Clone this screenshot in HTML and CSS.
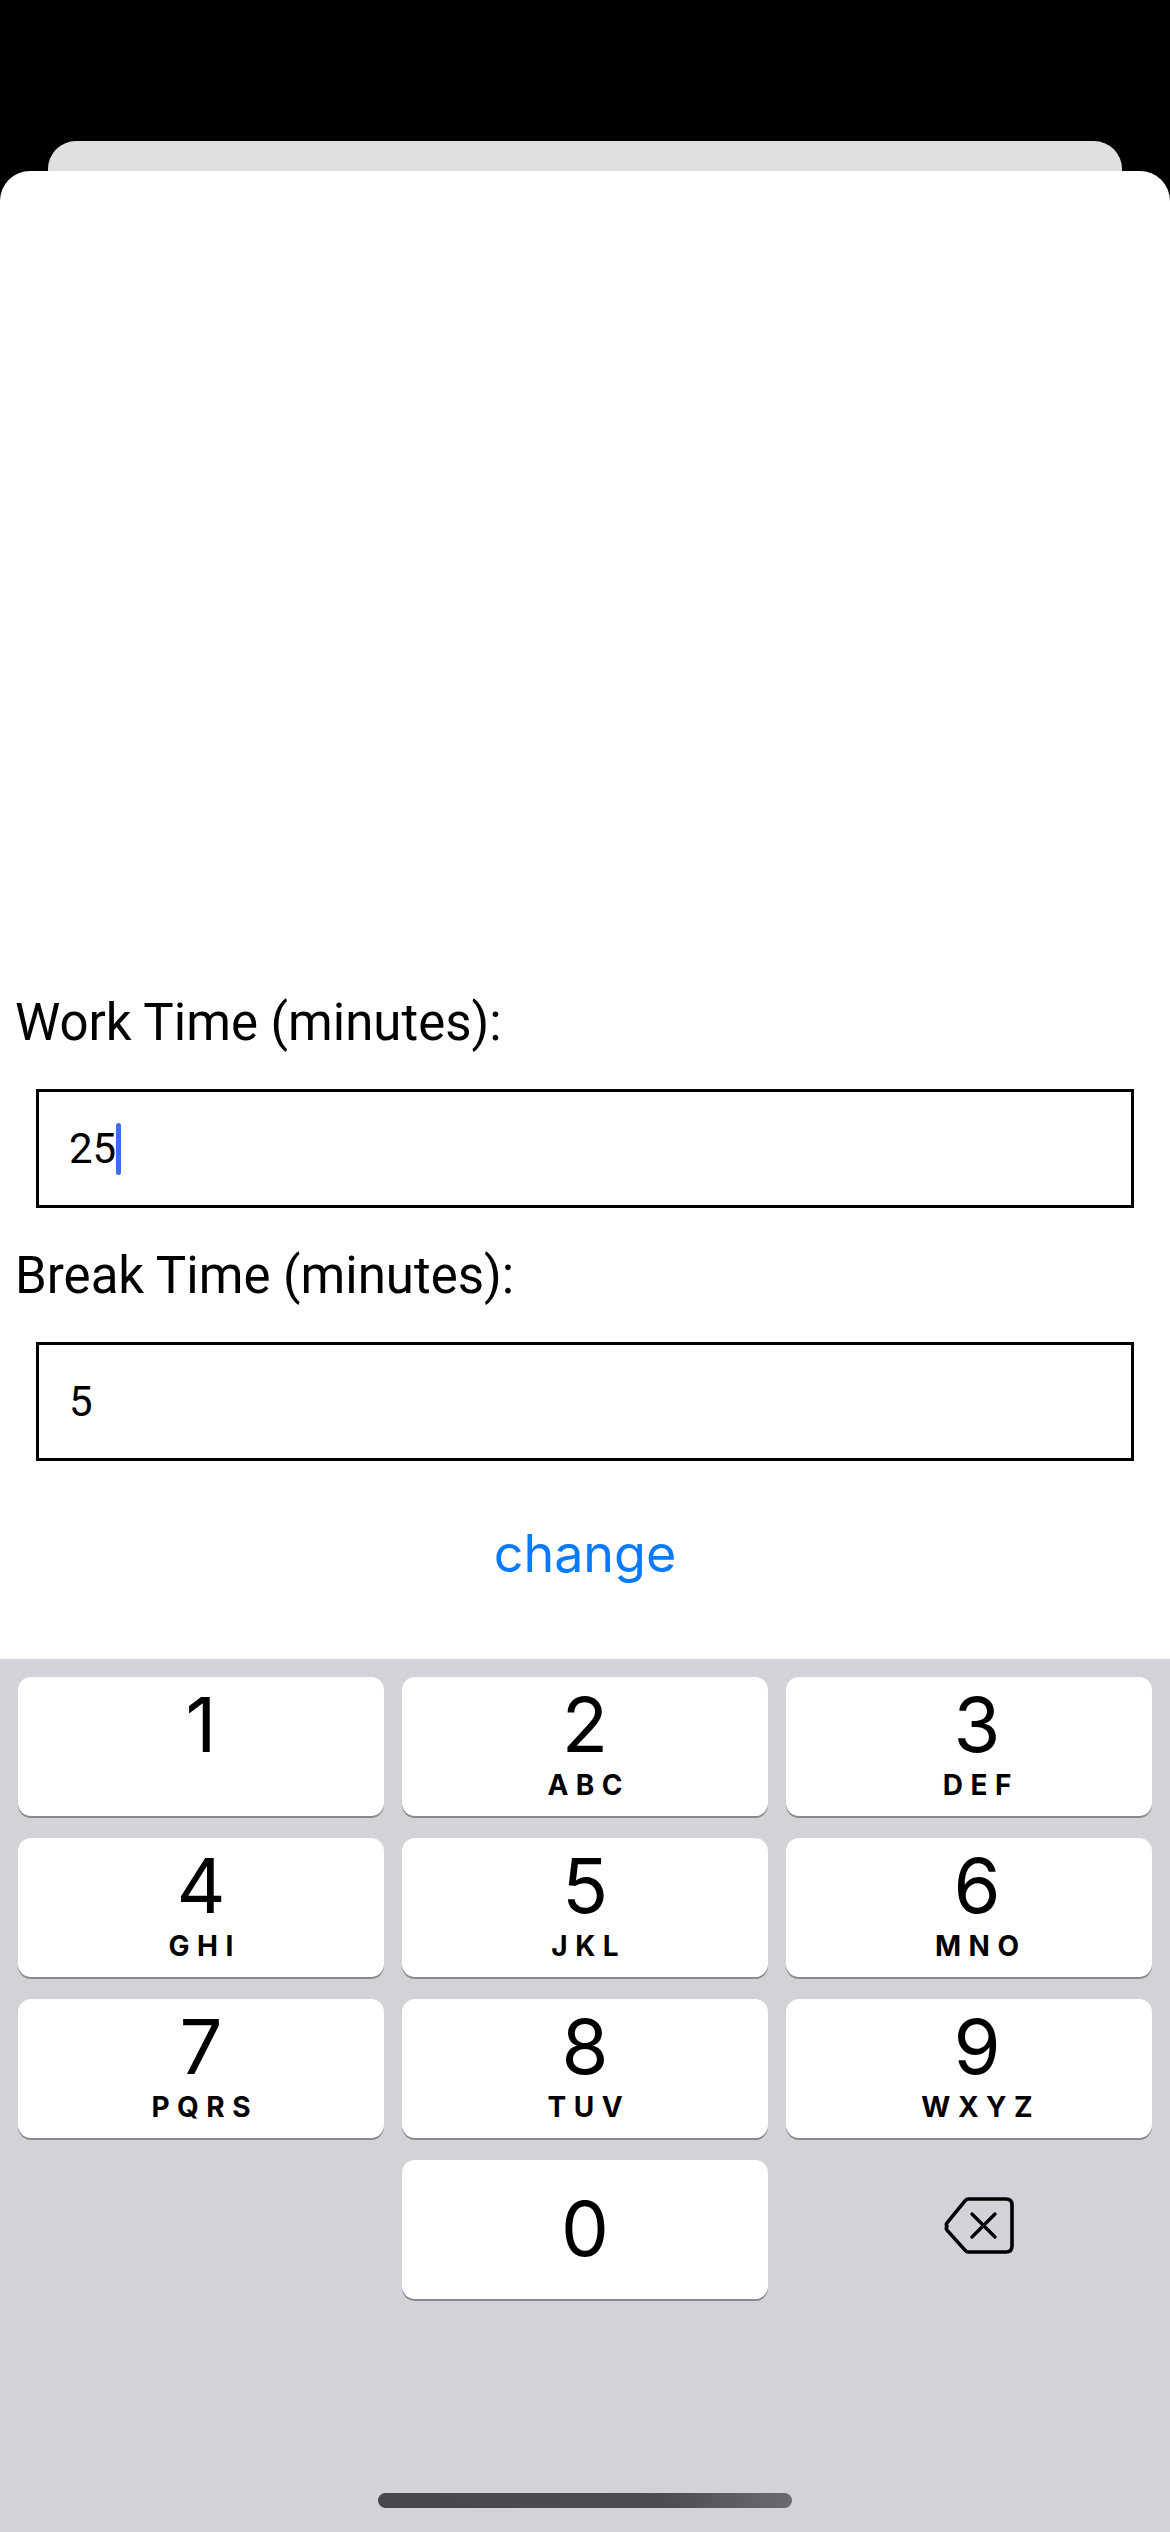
FILE: index.html
```html
<!DOCTYPE html>
<html lang="en">
<head>
<meta charset="utf-8">
<title>Timer Settings</title>
<link rel="stylesheet" href="styles.css">
</head>
<body>
<div class="screen">
  <div class="back-card"></div>
  <div class="sheet">
    <div class="form">
      <div class="label">Work Time (minutes):</div>
      <div class="field"><span class="value">25</span><span class="caret"></span></div>
      <div class="label label-second">Break Time (minutes):</div>
      <div class="field"><span class="value">5</span></div>
      <div class="action">change</div>
    </div>
  </div>
  <div class="keyboard">
    <div class="keys">
      <div class="key"><span class="digit">1</span><span class="letters"></span></div>
      <div class="key"><span class="digit">2</span><span class="letters">ABC</span></div>
      <div class="key key-right"><span class="digit">3</span><span class="letters">DEF</span></div>
      <div class="key"><span class="digit">4</span><span class="letters">GHI</span></div>
      <div class="key"><span class="digit">5</span><span class="letters">JKL</span></div>
      <div class="key key-right"><span class="digit">6</span><span class="letters">MNO</span></div>
      <div class="key"><span class="digit">7</span><span class="letters">PQRS</span></div>
      <div class="key"><span class="digit">8</span><span class="letters">TUV</span></div>
      <div class="key key-right"><span class="digit">9</span><span class="letters">WXYZ</span></div>
      <div class="key-blank"></div>
      <div class="key key-zero"><span class="digit">0</span></div>
      <div class="key-delete">
        <svg class="delete-icon" width="74" height="62" viewBox="0 0 74 62" aria-hidden="true">
          <path d="M5 31.5 Q3.6 29.5 5.2 27.6 L23.2 5.6 Q24.6 4 26.6 4 L64 4 Q70 4 70 10 L70 51 Q70 57 64 57 L26.6 57 Q24.6 57 23.2 55.4 L5.2 35.4 Q3.6 33.5 5 31.5 Z" fill="none" stroke="#000" stroke-width="3.6" stroke-linejoin="round"/>
          <path d="M30 19 L53 42 M53 19 L30 42" fill="none" stroke="#000" stroke-width="3.4" stroke-linecap="round"/>
        </svg>
      </div>
    </div>
    <div class="home-bar"></div>
  </div>
</div>
</body>
</html>
```

FILE: styles.css
```css
html, body {
  margin: 0;
  padding: 0;
  background: #000;
}

.screen {
  width: 1170px;
  height: 2532px;
  display: flex;
  flex-direction: column;
  padding-top: 141px;
  box-sizing: border-box;
  background: #000;
  overflow: hidden;
}

.back-card {
  height: 30px;
  margin: 0 48px;
  background: #e0e0e0;
  border-radius: 28px 28px 0 0;
  flex: none;
}

.sheet {
  height: 1488px;
  flex: none;
  background: #fff;
  border-radius: 30px 30px 0 0;
  box-sizing: border-box;
  padding-top: 821px;
}

.form {
  display: flex;
  flex-direction: column;
}

.label {
  font-family: Roboto, "Liberation Sans", sans-serif;
  font-size: 51px;
  line-height: 62px;
  color: #000;
  padding-left: 15px;
}

.label-second {
  margin-top: 37px;
}

.field {
  margin: 35px 36px 0;
  height: 119px;
  box-sizing: border-box;
  border: 3px solid #000;
  display: flex;
  align-items: center;
  padding-left: 30px;
  font-family: Roboto, "Liberation Sans", sans-serif;
  font-size: 42px;
  color: #000;
}

.caret {
  width: 5px;
  height: 52px;
  border-radius: 3px;
  background: #3d6cf2;
}

.action {
  margin-top: 61px;
  text-align: center;
  font-family: Inter, "Noto Sans", sans-serif;
  font-size: 52px;
  line-height: 64px;
  color: #0a7aff;
}

.keyboard {
  flex: 1;
  background: #d1d3d9;
  display: flex;
  flex-direction: column;
  padding: 18px 18px 0;
}

.keys {
  display: grid;
  grid-template-columns: repeat(3, 366px);
  grid-auto-rows: 139px;
  column-gap: 18px;
  row-gap: 22px;
}

.key {
  background: #fff;
  border-radius: 13px;
  box-shadow: 0 2px 0 #898a8d;
  display: flex;
  flex-direction: column;
  align-items: center;
  padding-top: 8px;
  box-sizing: border-box;
  font-family: Inter, "Noto Sans", sans-serif;
  color: #000;
}

.key-right {
  padding-left: 16px;
}

.key-zero {
  padding-top: 29px;
}

.digit {
  font-size: 76px;
  line-height: 78px;
  font-weight: 400;
}

.letters {
  font-size: 28px;
  line-height: 35px;
  font-weight: 700;
  letter-spacing: 7.5px;
  padding-left: 7.5px;
  margin-top: 5px;
}

.key-blank {
  background: transparent;
}

.key-delete {
  display: flex;
  justify-content: center;
  padding-top: 35px;
  box-sizing: border-box;
}

.delete-icon {
  margin-left: 20px;
}

.home-bar {
  width: 414px;
  height: 15px;
  border-radius: 8px;
  background: linear-gradient(90deg, #47484c 0%, #4c4d51 70%, #6b6c70 100%);
  margin: auto auto 24px;
}
```
